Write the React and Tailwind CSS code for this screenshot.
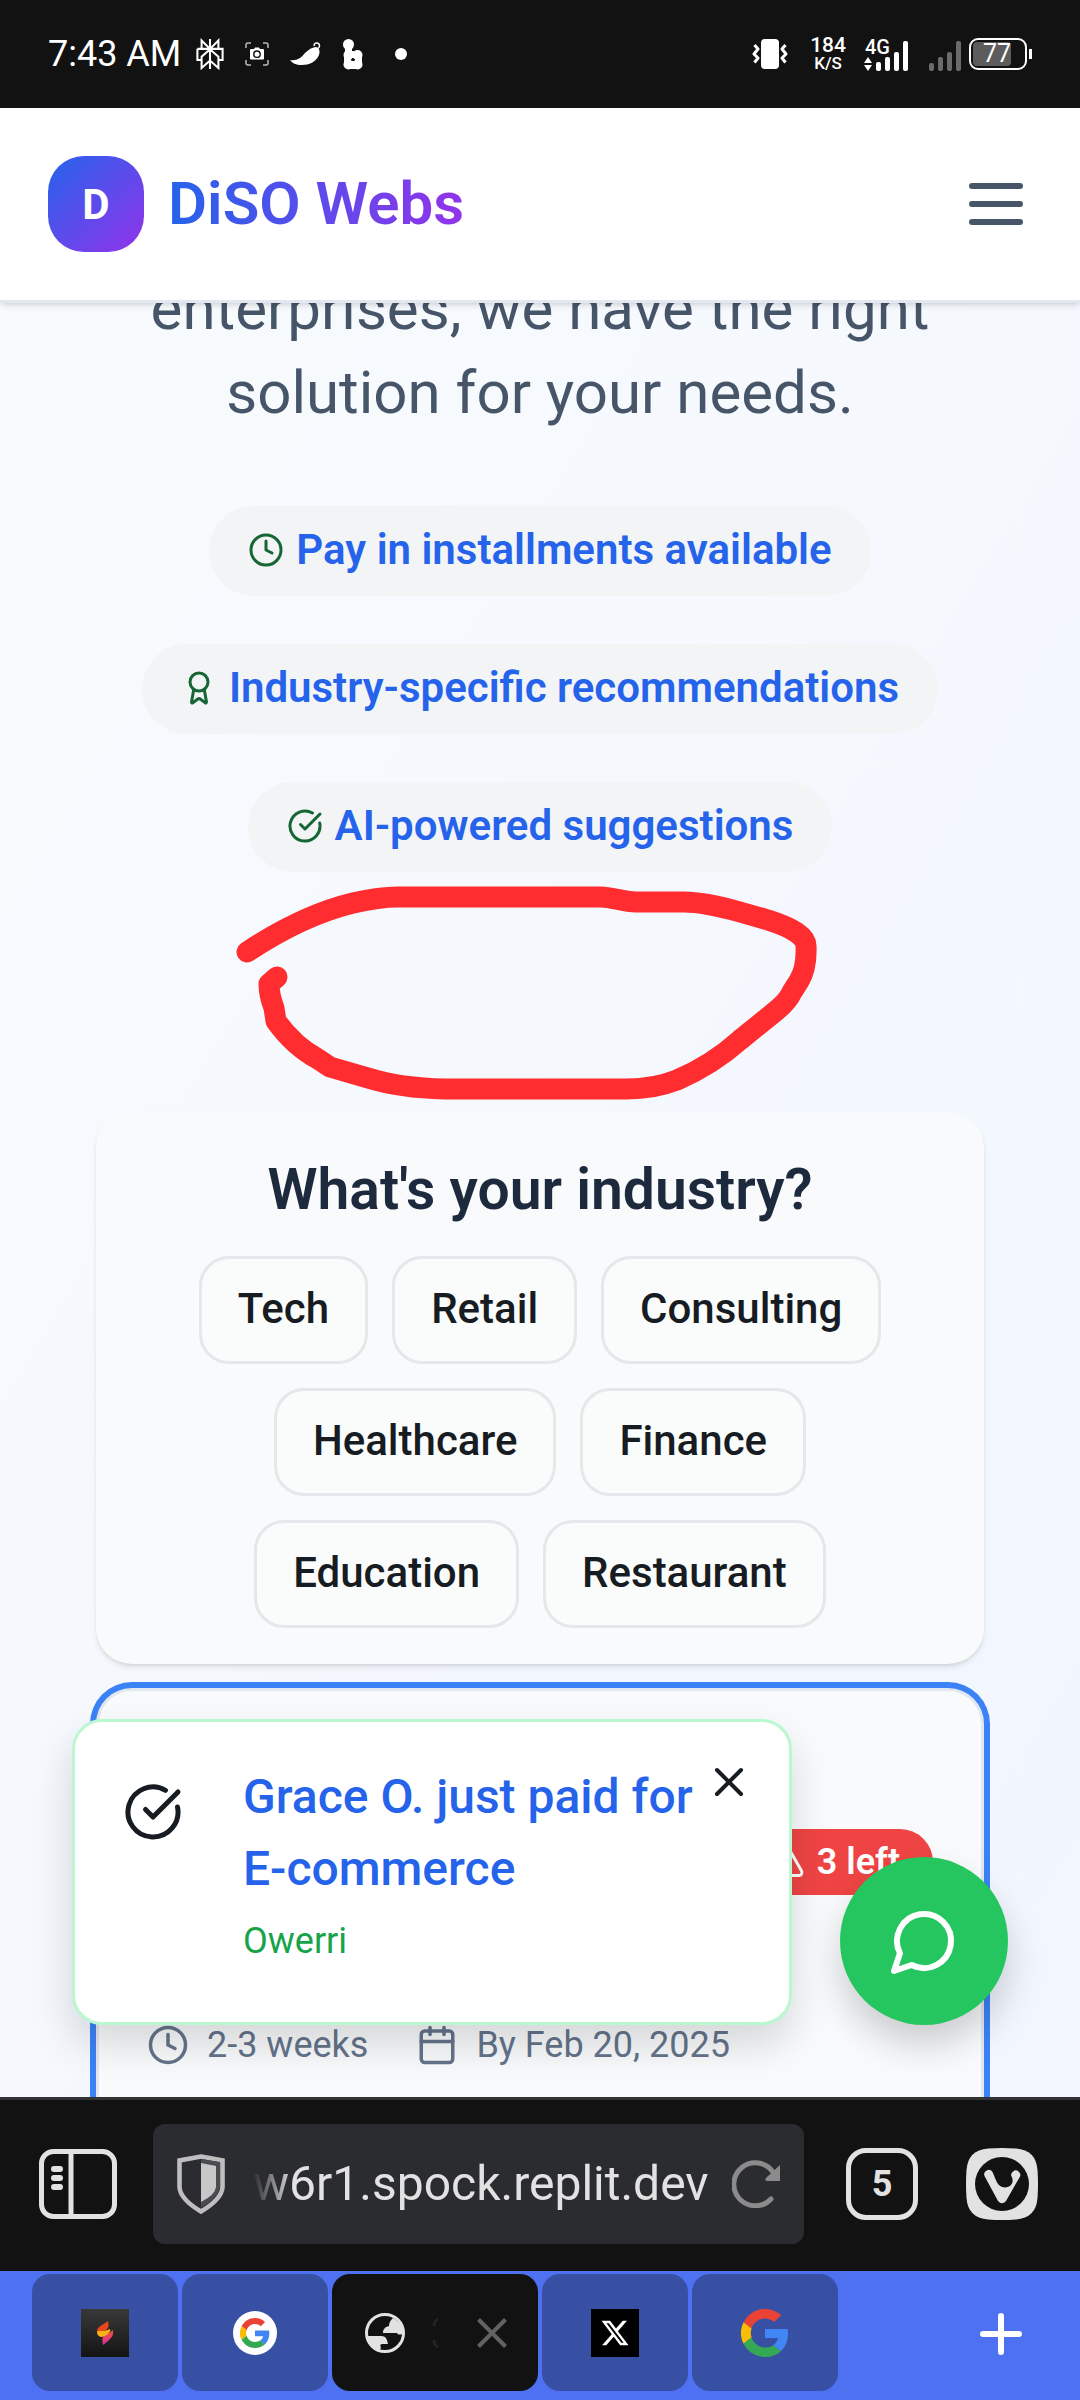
import { AlertTriangle, Award, Calendar, CircleCheckBig, Clock, X } from "lucide-react";
import { FaXTwitter } from "react-icons/fa6";

const industries = ["Tech", "Retail", "Consulting", "Healthcare", "Finance", "Education", "Restaurant"];
const perks = [
  { label: "Pay in installments available", Icon: Clock },
  { label: "Industry-specific recommendations", Icon: Award },
  { label: "AI-powered suggestions", Icon: CircleCheckBig },
];

function StatusBar() {
  return (
    <div className="flex h-[108px] shrink-0 items-center justify-between bg-[#121212] px-12 text-white">
      <div className="flex items-center">
        <span className="text-[36px] leading-[42px]">7:43 AM</span>
        <svg className="ml-[15px] h-8 w-7" viewBox="0 0 30 32" fill="none" stroke="white" strokeWidth="2.200">
          <path d="M15 0v32M6 1.500l9 9 9-9v9H6zM1.500 10.500h27v12H24M1.500 10.500v12H6M15 11l-9 8v12l9-8 9 8V19z" />
        </svg>
        <svg className="ml-[21px] size-6" viewBox="0 0 24 24" fill="none" stroke="white">
          <path d="M1 6V3a2 2 0 0 1 2-2h3M18 1h3a2 2 0 0 1 2 2v3M23 18v3a2 2 0 0 1-2 2h-3M6 23H3a2 2 0 0 1-2-2v-3" stroke="#bbb" strokeWidth="1.500" />
          <path d="M6 7h3L10 5.500h4L15 7h3a1 1 0 0 1 1 1v8.500a1 1 0 0 1-1 1H6a1 1 0 0 1-1-1V8a1 1 0 0 1 1-1z" fill="white" stroke="none" />
          <circle cx="12" cy="12.200" r="3.200" stroke="#121212" strokeWidth="1.400" />
        </svg>
        <svg className="ml-[21px] h-6 w-[31px]" viewBox="0 0 31 24" fill="white">
          <path d="M0 18c7 1 11-2 15-7 4-4 8-6 11-6 4 1 4 5 3 8-3 7-10 10-17 10C6 23 2 21 0 18z" />
          <path d="M27 7c3-1 3.500-5 .5-6-2-.500-4 1-3 3" fill="none" stroke="white" strokeWidth="1.500" />
        </svg>
        <svg className="ml-[22px] h-[31px] w-5" viewBox="0 0 20 31" fill="white">
          <circle cx="5.500" cy="5.500" r="5.500" /><circle cx="5.500" cy="16" r="5" /><circle cx="14.500" cy="16" r="5" />
          <circle cx="5.500" cy="25.500" r="5" /><circle cx="14.500" cy="25.500" r="5" /><path d="M2 8h7v8H2zM5 12h6v7H5zM1 16h7v9H1zM12 16h7v9h-7zM5 22h9v8H5z" />
        </svg>
        <span className="ml-8 size-3 rounded-full bg-white" />
      </div>
      <div className="flex items-center">
        <svg className="h-8 w-9" viewBox="0 0 36 32" fill="none" stroke="white" strokeWidth="3">
          <rect x="9" y="1" width="18" height="30" rx="4" fill="white" stroke="none" />
          <path d="M2.500 7l3.500 4-4 5 4 4-3.500 4.500M33.500 7L30 11l4 5-4 4 3.500 4.500" strokeLinejoin="round" />
        </svg>
        <div className="ml-[22px] text-center font-medium">
          <div className="text-[21px] leading-[18px]">184</div>
          <div className="text-[17px] leading-[19px]">K/S</div>
        </div>
        <svg className="ml-[18px] h-[34px] w-11 overflow-visible" viewBox="0 0 44 34" fill="white">
          <text x="1" y="17" fontFamily="Roboto" fontWeight="500" fontSize="20">4G</text>
          <path d="M0 26l4-6 4 6zM0 28l4 6 4-6z" />
          <rect x="12" y="25" width="5" height="9" rx="2" /><rect x="21" y="20" width="5" height="14" rx="2" /><rect x="30" y="15" width="5" height="19" rx="2" /><rect x="39" y="4" width="5" height="30" rx="2" />
        </svg>
        <svg className="ml-[21px] h-[34px] w-8" viewBox="0 0 32 34" fill="#6b6b6b">
          <rect x="0" y="26" width="5" height="8" rx="2" /><rect x="9" y="20" width="5" height="14" rx="2" /><rect x="18" y="15" width="5" height="19" rx="2" /><rect x="27" y="4" width="5" height="30" rx="2" />
        </svg>
        <div className="ml-2 flex h-8 w-[58px] items-center rounded-[9px] border-2 border-white p-0.5">
          <div className="flex h-full w-[38px] items-center justify-end rounded-[4px] bg-[#5c5c5c] text-[25px] leading-6">77</div>
        </div>
        <span className="ml-0.5 h-2.5 w-[3px] bg-white" />
      </div>
    </div>
  );
}

function Header() {
  return (
    <header className="relative z-10 flex h-[195px] shrink-0 items-center justify-between border-b-[3px] border-[#e2e8f0] bg-white px-12 shadow-md">
      <a href="#home" className="flex items-center gap-6">
        <span className="flex size-24 items-center justify-center rounded-[36px] bg-linear-to-br/srgb from-[#2563eb] to-[#9333ea] text-[42px] font-bold text-white">D</span>
        <span className="bg-linear-to-r/srgb from-[#2563eb] to-[#9333ea] bg-clip-text text-[60px] leading-[84px] font-semibold text-transparent">DiSO Webs</span>
      </a>
      <button aria-label="Menu" className="mr-[9px] flex w-[54px] flex-col gap-3">
        <span className="h-1.5 w-full rounded-full bg-[#475569]" />
        <span className="h-1.5 w-full rounded-full bg-[#475569]" />
        <span className="h-1.5 w-full rounded-full bg-[#475569]" />
      </button>
    </header>
  );
}

function Annotation() {
  return (
    <svg className="absolute top-[580px] left-1/2 h-[218px] w-[586px] -translate-x-[306px]" viewBox="234 883 586 218" fill="none" stroke="#ff2d30" strokeWidth="21" strokeLinecap="round" strokeLinejoin="round">
      <path d="M247 952Q303 915 353 903Q380 897 397 897H601C612 897 623 902 636 902H684Q704 902 740 912L768 920Q806 932 806 946Q807 968 799 981L792 992Q788 1001 777 1010L740 1040Q712 1065 677 1080Q654 1089 627 1089H445Q400 1088 368 1078L330 1067L318 1059Q294 1046 276 1021L274 1008Q269 995 269 984L277 977" />
    </svg>
  );
}

function IndustryCard() {
  return (
    <section className="rounded-[36px] bg-[#f9fafc] p-9 shadow-md">
      <h2 className="pt-1.5 text-center text-[57px] leading-[72px] font-semibold text-slate-800">What's your industry?</h2>
      <div className="mt-[30px] flex flex-wrap justify-center gap-6 px-9">
        {industries.map((name) => (
          <button key={name} className="h-[108px] rounded-[30px] border-[3px] border-gray-200 bg-[#fafbfb] px-9 pb-0.5 text-[42px] leading-[60px] font-medium text-[#171c22]">{name}</button>
        ))}
      </div>
    </section>
  );
}

function PlanCard() {
  return (
    <section className="mt-6 h-[600px] rounded-[36px] border-[3px] border-[#e2e8f0] bg-[#f9fafc] px-12 ring-6 ring-[#3b82f6]">
      <div className="mt-[138px] flex justify-end">
        <span className="flex h-[66px] items-center gap-3 rounded-full bg-[#ef4444] px-[33px] text-[36px] font-semibold text-white">
          <AlertTriangle size={36} />3 left
        </span>
      </div>
      <div className="mt-[126px] flex items-center gap-12 text-[36px] leading-12 text-[#64748b]">
        <span className="flex items-center gap-[18px]"><Clock size={42} />2-3 weeks</span>
        <span className="flex items-center gap-[18px]"><Calendar size={42} />By Feb 20, 2025</span>
      </div>
    </section>
  );
}

function Toast() {
  return (
    <div role="status" className="absolute bottom-[72px] left-[72px] flex h-[306px] w-[720px] items-start rounded-[30px] border-[3px] border-[#bbf7d0] bg-white p-9 shadow-[0_20px_40px_rgba(0,0,0,0.14)]">
      <CircleCheckBig size={60} className="mt-6 ml-3 shrink-0 text-[#171c22]" />
      <div className="mt-[3px] ml-[60px]">
        <p className="w-[462px] text-[48px] leading-[72px] font-medium text-[#2563eb]">Grace O. just paid for E-commerce</p>
        <p className="mt-3 text-[36px] leading-12 text-[#16a34a]">Owerri</p>
      </div>
      <button aria-label="Dismiss" className="absolute top-9 right-9 text-[#171c22]"><X size={48} /></button>
    </div>
  );
}

function Page() {
  return (
    <main className="relative min-h-0 flex-1 overflow-hidden bg-linear-to-br/srgb from-[#f8fbfd] to-[#f1f6ff]">
      <div className="px-24">
        <p className="-mt-9 text-center text-[60px] leading-[84px] text-[#475569]">enterprises, we have the right<br />solution for your needs.</p>
        <ul className="mt-[71px] flex flex-col items-center gap-12">
          {perks.map(({ label, Icon }) => (
            <li key={label} className="flex h-[90px] items-center gap-3 rounded-full border-[3px] border-[#f3f4f6] bg-[#f3f4f6] px-9 pb-0.5 text-[42px] leading-[60px] font-semibold text-[#2563eb]">
              <Icon size={36} className="text-[#166534]" />{label}
            </li>
          ))}
        </ul>
        <div className="mt-60"><IndustryCard /><PlanCard /></div>
      </div>
      <Annotation />
      <Toast />
      <button aria-label="Chat" className="absolute right-[72px] bottom-[72px] flex size-[168px] items-center justify-center rounded-full bg-[#25c660] shadow-[0_20px_36px_rgba(0,0,0,0.18)]">
        <svg className="size-[72px]" viewBox="0 0 24 24" fill="none" stroke="white" strokeWidth="2" strokeLinecap="round" strokeLinejoin="round"><path d="M7.900 20A9 9 0 1 0 4 16.100L2 22Z" /></svg>
      </button>
    </main>
  );
}

function BrowserBar() {
  return (
    <div className="flex h-[174px] shrink-0 items-center border-t-[3px] border-[#333336] bg-[#121212] pr-[42px] pb-[3px] pl-[39px] text-[#e2e2e2]">
      <button aria-label="Panels">
        <svg className="h-[72px] w-[78px]" viewBox="0 0 78 72" fill="none" stroke="currentColor" strokeWidth="5">
          <rect x="2.500" y="3.500" width="73" height="65" rx="12" /><path d="M32 4v64" /><path d="M15 21h6M15 30h6M15 39h6" strokeWidth="6" strokeLinecap="round" />
        </svg>
      </button>
      <div className="ml-9 flex h-[120px] min-w-0 flex-1 items-center rounded-xl bg-[#2b2c30] px-6">
        <svg className="h-[60px] w-12 shrink-0" viewBox="0 0 48 60">
          <path d="M24 2.500L45.500 6.500V33Q45 45 24 57.500Q3 45 2.500 33V6.500z" fill="none" stroke="#bebebe" strokeWidth="4.600" />
          <path d="M24 5L43 8v25Q42 43 24 54z" fill="#4b4c50" /><path d="M24 9l15 3v21Q38 41 24 48z" fill="#c8c8c8" />
        </svg>
        <input aria-label="Address" readOnly defaultValue="w6r1.spock.replit.dev" className="ml-7 w-0 min-w-0 flex-1 bg-transparent text-[48px] leading-[60px] outline-none [mask-image:linear-gradient(to_right,transparent,black_40px)]" />
        <button aria-label="Reload" className="ml-5 shrink-0 text-[#8b8b8b]">
          <svg className="size-12" viewBox="0 0 48 48" fill="none" stroke="currentColor" strokeWidth="5" strokeLinecap="round"><path d="M39 39A21.500 21.500 0 1 1 41 12" /><path d="M48 5v16H35q-3-1-1-3z" fill="currentColor" stroke="none" /></svg>
        </button>
      </div>
      <button aria-label="Tabs" className="ml-[42px] flex size-[72px] items-center justify-center rounded-[20px] border-[5px] border-[#e2e2e2] text-[36px] font-bold">5</button>
      <button aria-label="Vivaldi menu" className="ml-12">
        <svg className="size-[72px]" viewBox="0 0 72 72">
          <path d="M22 .5Q36-.5 50 .5Q70 2 71.500 22Q72.500 36 71.500 50Q70 70 50 71.500Q36 72.500 22 71.500Q2 70 .5 50Q-.5 36 .5 22Q2 2 22 .5z" fill="#e2e2e2" /><circle cx="36" cy="36" r="27" fill="#121212" />
          <path d="M18.500 28a4.500 4.500 0 0 1 8-4C30 31 31 39.500 39 39.500c6 0 9-5 7-10a4.500 4.500 0 1 1 7.500 0L40 53q-4 4.500-8 0z" fill="#e2e2e2" />
        </svg>
      </button>
    </div>
  );
}

function GoogleG({ className }) {
  return (
    <svg className={className} viewBox="0 0 48 48">
      <path fill="#EA4335" d="M24 9.500c3.540 0 6.710 1.220 9.210 3.600l6.850-6.850C35.900 2.380 30.470 0 24 0 14.620 0 6.510 5.380 2.560 13.220l7.980 6.190C12.430 13.720 17.740 9.500 24 9.500z" />
      <path fill="#4285F4" d="M46.980 24.550c0-1.570-.15-3.090-.38-4.550H24v9.020h12.940c-.58 2.960-2.260 5.480-4.780 7.180l7.730 6c4.510-4.180 7.090-10.360 7.090-17.650z" />
      <path fill="#FBBC05" d="M10.530 28.590a14.500 14.500 0 0 1 0-9.180l-7.980-6.190a24 24 0 0 0 0 21.560z" />
      <path fill="#34A853" d="M24 48c6.480 0 11.930-2.130 15.890-5.810l-7.730-6c-2.150 1.450-4.920 2.300-8.160 2.300-6.260 0-11.570-4.220-13.470-9.910l-7.980 6.190C6.510 42.620 14.620 48 24 48z" />
    </svg>
  );
}

function TabStrip() {
  const tab = "flex h-[117px] w-[146px] items-center justify-center rounded-[18px] bg-[#3850a4]";
  return (
    <nav aria-label="Open tabs" className="flex h-[129px] shrink-0 items-start gap-1 bg-[#4d71f0] pt-[3px] pr-14 pl-8">
      <button aria-label="Tab 1" className={tab}>
        <svg className="size-12" viewBox="0 0 48 48">
          <defs>
            <linearGradient id="tile" x2="0" y2="1"><stop stopColor="#383838" /><stop offset="1" stopColor="#141414" /></linearGradient>
            <linearGradient id="tail" x2="0" y2="1"><stop stopColor="#f0503c" /><stop offset="1" stopColor="#d8309a" /></linearGradient>
          </defs>
          <path d="M0 0h48v48H0z" fill="url(#tile)" />
          <path d="M27 12c1 4 1 7-2 9l-9 3c-1-6 4-7 11-12z" fill="#e8471c" />
          <path d="M32 21c1 6-2 8-5 11l-5 4c-1-6-1-8 2-10q5-2 8-5z" fill="url(#tail)" />
          <path d="M16 23c2-2 7 0 13-3 2 3-5 8-9 8q-4-1-4-5z" fill="#fbb116" />
        </svg>
      </button>
      <button aria-label="Google" className={tab}><span className="flex size-11 items-center justify-center rounded-full bg-white"><GoogleG className="size-[30px]" /></span></button>
      <div className="flex h-[117px] w-[206px] items-center rounded-[18px] bg-[#121212] pr-[31px] pl-[33px]">
        <svg className="size-10" viewBox="0 0 40 40">
          <circle cx="20" cy="20" r="18.500" fill="none" stroke="#e2e2e2" strokeWidth="3" />
          <path d="M28 5c7 4 10 9 11 15-3 2-6 2-7 0H18c0-4 2-6 6-7 0-3 1-5 4-8zM2 23h14c5 0 6 3 7 8h-5c-3 0-3 1-2 4l-3 3C6 35 3 30 2 23z" fill="#e2e2e2" />
        </svg>
        <svg className="ml-[27px] h-8 w-2" viewBox="0 0 8 32" fill="none" stroke="#242424" strokeWidth="3"><path d="M6 2Q2 4 2 9M2 23q0 5 4 7" /></svg>
        <button aria-label="Close tab" className="ml-auto"><svg className="size-[30px]" viewBox="0 0 30 30" stroke="#626262" strokeWidth="4"><path d="M1.500 1.500l27 27M28.500 1.500l-27 27" /></svg></button>
      </div>
      <button aria-label="X" className={tab}><span className="flex size-12 items-center justify-center bg-black text-white"><FaXTwitter size={30} /></span></button>
      <button aria-label="Google search" className={tab}><GoogleG className="size-12" /></button>
      <button aria-label="New tab" className="mt-[37px] ml-auto"><svg className="size-[46px]" viewBox="0 0 46 46" stroke="white" strokeWidth="6" strokeLinecap="round"><path d="M23 5v36M5 23h36" /></svg></button>
    </nav>
  );
}

export default function App() {
  return (
    <div className="flex h-screen flex-col overflow-hidden font-['Roboto',sans-serif]">
      <StatusBar />
      <Header />
      <Page />
      <BrowserBar />
      <TabStrip />
    </div>
  );
}
